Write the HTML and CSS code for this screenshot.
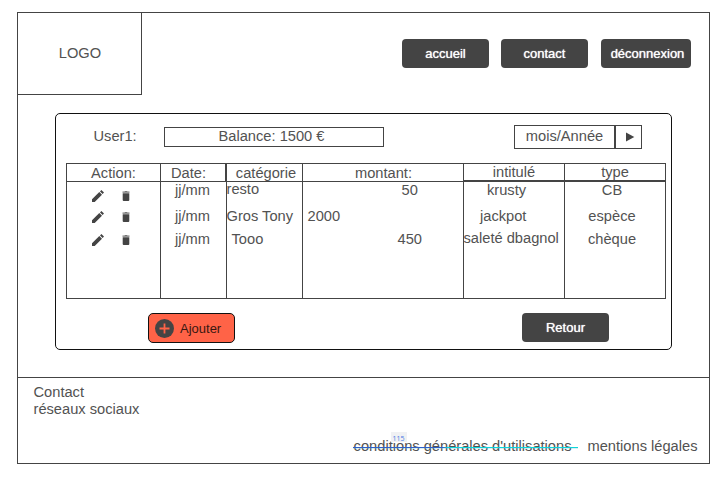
FILE: index.html
```html
<!DOCTYPE html>
<html lang="fr">
<head>
<meta charset="utf-8">
<title>Budget</title>
<link rel="stylesheet" href="styles.css">
</head>
<body>
<svg class="defs" width="0" height="0">
  <symbol id="edit" viewBox="0 0 12 12"><path d="M0 9.300L7.300 2L10 4.700L2.700 12H0zM8 1.400L9.400 0L12 2.600L10.600 4z"/></symbol>
  <symbol id="trash" viewBox="0 0 8 10"><path d="M.7 2.200h6.600V9a1 1 0 0 1-1 1H1.700a1 1 0 0 1-1-1z"/><path class="lid" d="M.5 .600h2L3 0h2l.5 .600h2V1.800H.5z"/></symbol>
</svg>
<div class="page">
  <header class="top">
    <div class="logo">LOGO</div>
    <nav class="nav">
      <a class="btn">accueil</a>
      <a class="btn">contact</a>
      <a class="btn wide">déconnexion</a>
    </nav>
  </header>
  <main class="card">
    <div class="bar">
      <span class="user">User1:</span>
      <div class="balance">Balance: 1500 €</div>
      <div class="month"><span class="month-name">mois/Année</span><span class="next"><svg width="10" height="10" viewBox="0 0 10 10"><path d="M1 .500L9.300 5L1 9.500z"/></svg></span></div>
    </div>
    <div class="table">
      <div class="col actions">
        <div class="head">Action:</div>
        <div class="tools"><svg class="edit"><use href="#edit"/></svg><svg class="trash"><use href="#trash"/></svg></div>
        <div class="tools"><svg class="edit"><use href="#edit"/></svg><svg class="trash"><use href="#trash"/></svg></div>
        <div class="tools last"><svg class="edit"><use href="#edit"/></svg><svg class="trash"><use href="#trash"/></svg></div>
      </div>
      <div class="col date">
        <div class="head">Date:</div>
        <div class="cell">jj/mm</div><div class="cell">jj/mm</div><div class="cell">jj/mm</div>
      </div>
      <div class="col category">
        <div class="head">catégorie</div>
        <div class="cell">resto</div><div class="cell">Gros Tony</div><div class="cell indent">Tooo</div>
      </div>
      <div class="col amount">
        <div class="head">montant:</div>
        <div class="cell credit">50</div><div class="cell debit">2000</div><div class="cell total">450</div>
      </div>
      <div class="col label">
        <div class="head">intitulé</div>
        <div class="cell krusty">krusty</div><div class="cell jackpot">jackpot</div><div class="cell">saleté dbagnol</div>
      </div>
      <div class="col type">
        <div class="head">type</div>
        <div class="cell">CB</div><div class="cell">espèce</div><div class="cell">chèque</div>
      </div>
    </div>
    <div class="buttons">
      <a class="add"><svg width="19" height="19" viewBox="0 0 19 19"><circle cx="9.500" cy="9.500" r="9.500"/><path d="M9.500 4.500v10M4.500 9.500h10"/></svg>Ajouter</a>
      <a class="btn">Retour</a>
    </div>
  </main>
  <footer class="footer">
    <div>Contact</div>
    <div>réseaux sociaux</div>
    <div class="legal">
      <span class="terms">conditions générales d'utilisations<i class="strike"></i><b class="measure">115</b></span>
      <span>mentions légales</span>
    </div>
  </footer>
</div>
</body>
</html>
```
FILE: styles.css
```css
* { box-sizing: border-box; }
body {
  margin: 0;
  background: #fff;
  color: #525252;
  font: 14.67px/17px "Liberation Sans", Arial, sans-serif;
  white-space: nowrap;
}
svg { display: block; fill: #444; flex: none; }
.defs { position: absolute; }
.page {
  width: 693px;
  height: 452px;
  margin: 12px 0 0 17px;
  border: 1px solid #444;
  display: flex;
  flex-direction: column;
}
.top { display: flex; justify-content: space-between; height: 82px; }
.logo {
  width: 124px;
  border: solid #444;
  border-width: 0 1px 1px 0;
  display: flex;
  align-items: center;
  justify-content: center;
  padding-left: 1px;
}
.nav { display: flex; gap: 12px; padding: 26px 18px 0 0; }
.btn {
  width: 87px;
  height: 29px;
  border-radius: 4px;
  background: #444;
  color: #fff;
  font-size: 13px;
  line-height: 29px;
  text-align: center;
  text-shadow: 0 0 1px #fff;
}
.nav .wide { width: 90px; margin-left: 1px; padding-left: 3px; }
.card {
  width: 617px;
  height: 237px;
  margin: 18px 0 27px 37px;
  padding: 11px 5px 0 10px;
  border: 1px solid #111;
  border-radius: 5px;
}
.bar { display: flex; height: 38px; }
.user { width: 98px; padding: 3px 0 0 27.500px; }
.balance {
  width: 220px;
  height: 20px;
  margin-top: 2px;
  padding-right: 5px;
  border: 1px solid #444;
  text-align: center;
}
.month { display: flex; height: 24px; margin-left: 130px; border: 1px solid #444; }
.month-name { width: 101px; border-right: 2px solid #444; text-align: center; line-height: 21px; }
.next { width: 25px; display: flex; align-items: center; justify-content: center; padding-left: 3px; }
.table { display: flex; width: 600px; height: 136px; border: 1px solid #444; }
.col { border-right: 1px solid #444; display: flex; flex-direction: column; }
.head { height: 18px; padding-top: 1px; border-bottom: 1px solid #444; text-align: center; flex: none; }
.cell { height: 17px; flex: none; }
.cell:nth-child(3) { margin-top: 9px; }
.cell:nth-child(4) { margin-top: 6px; }
.actions { width: 94px; }
.tools { display: flex; align-items: center; height: 16px; margin-top: 5px; padding-left: 25px; gap: 18px; }
.tools:nth-child(2) { margin-top: 6px; }
.tools.last { margin-top: 7px; }
.edit { width: 12px; height: 12px; }
.trash { width: 8px; height: 10px; }
.lid { fill: #777; }
.date { width: 66px; }
.date .head { padding-right: 9px; border-right: 1px solid #444; }
.date .cell { padding-left: 14px; }
.category { width: 76px; }
.category .head { padding-left: 3px; }
.category .cell { margin-left: -.5px; }
.category .cell:nth-child(2) { margin: -1px 0 1px -.5px; }
.category .indent { padding-left: 5px; }
.amount { width: 161px; }
.amount .head { padding-left: 1px; }
.credit { padding-left: 98.500px; }
.debit { padding-left: 4.500px; }
.total { padding-left: 94.500px; }
.label { width: 101px; }
.label .head, .type .head { padding-top: 0; border-bottom-width: 2px; }
.krusty { padding-left: 23px; }
.jackpot { padding-left: 16px; }
.label .cell:nth-child(4) { margin: 5px 0 0 -.5px; }
.type { width: 100px; border-right: 0; }
.type .cell { text-align: center; padding-right: 6px; }
.buttons { display: flex; justify-content: space-between; padding: 14px 57px 0 82px; }
.add {
  width: 87px;
  height: 30px;
  border: 1px solid #111;
  border-radius: 5px;
  background: #ff6347;
  color: #3a1811;
  font-size: 13px;
  display: flex;
  align-items: center;
  gap: 6px;
  padding-left: 6px;
}
.add path { stroke: #ff6347; stroke-width: 1.800px; }
.footer { flex: 1; border-top: 1px solid #444; padding: 6px 11.500px 0 15.500px; }
.legal { display: flex; justify-content: flex-end; gap: 16px; margin-top: 20px; }
.terms { position: relative; }
.strike {
  position: absolute;
  left: -1px;
  right: -6px;
  top: 9px;
  height: 1px;
  background: linear-gradient(90deg, #2f5fc8 0 40%, #10d4d8 42%);
  box-shadow: 0 1px rgba(90, 200, 225, .25);
}
.measure {
  position: absolute;
  left: 37px;
  top: -6px;
  width: 16px;
  height: 10px;
  background: #f0f1f3;
  color: #4a78e4;
  font: 7px/13px "Open Sans", sans-serif;
  text-align: center;
}
```
